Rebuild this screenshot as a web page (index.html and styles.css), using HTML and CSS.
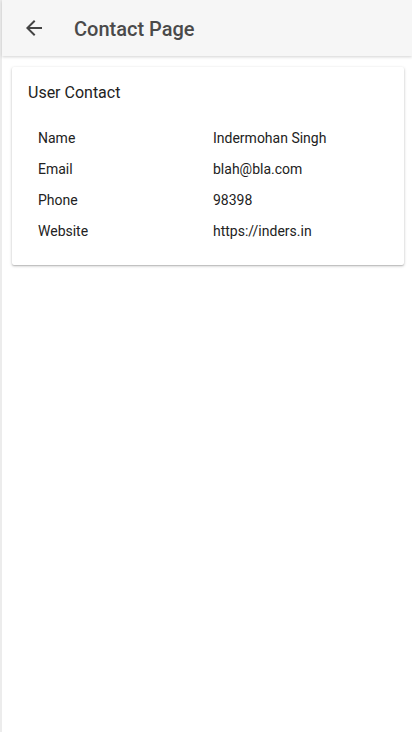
FILE: index.html
```html
<!DOCTYPE html>
<html>
<head>
<meta charset="utf-8">
<link rel="stylesheet" href="styles.css">
</head>
<body>
<div class="page">
  <header class="appbar">
    <button class="back" aria-label="Back">
      <svg width="24" height="24" viewBox="0 0 24 24"><path d="M20 11H7.83l5.59-5.59L12 4l-8 8 8 8 1.41-1.41L7.83 13H20v-2z" fill="#444"/></svg>
    </button>
    <h1 class="title">Contact Page</h1>
  </header>
  <main class="content">
    <section class="card">
      <h2 class="card-title">User Contact</h2>
      <div class="rows">
        <div class="row"><span class="label">Name</span><span class="value">Indermohan Singh</span></div>
        <div class="row"><span class="label">Email</span><span class="value">blah@bla.com</span></div>
        <div class="row"><span class="label">Phone</span><span class="value">98398</span></div>
        <div class="row"><span class="label">Website</span><span class="value">https://inders.in</span></div>
      </div>
    </section>
  </main>
</div>
</body>
</html>
```

FILE: styles.css
```css
* { box-sizing: border-box; }
html, body { margin: 0; padding: 0; background: #fff; }
body {
  font-family: Roboto, "Liberation Sans", sans-serif;
  color: #212121;
}
.page {
  min-height: 732px;
  border-left: 2px solid #ececec;
}
.appbar {
  height: 56px;
  background: #f6f6f6;
  display: flex;
  align-items: center;
  box-shadow: 0 1px 3px rgba(0,0,0,0.18);
  position: relative;
  z-index: 1;
}
.back {
  border: 0;
  background: none;
  padding: 0;
  margin-left: 20px;
  width: 24px;
  height: 24px;
  display: flex;
}
.title {
  margin: 2px 0 0 28px;
  font-size: 20px;
  font-weight: 500;
  color: #4a4a4a;
}
.content {
  padding: 11px 8px 0 10px;
}
.card {
  background: #fff;
  border-radius: 2px;
  box-shadow: 0 1px 3px rgba(0,0,0,0.25), 0 1px 1px rgba(0,0,0,0.1);
  padding: 16px 16px 19px 16px;
}
.card-title {
  margin: 0;
  font-size: 16px;
  font-weight: 400;
  line-height: 20px;
  color: #222;
}
.rows {
  margin-top: 19px;
  padding-left: 10px;
}
.row {
  display: grid;
  grid-template-columns: 175px 1fr;
  height: 31px;
  align-items: center;
  font-size: 14px;
  color: #222;
}
```
